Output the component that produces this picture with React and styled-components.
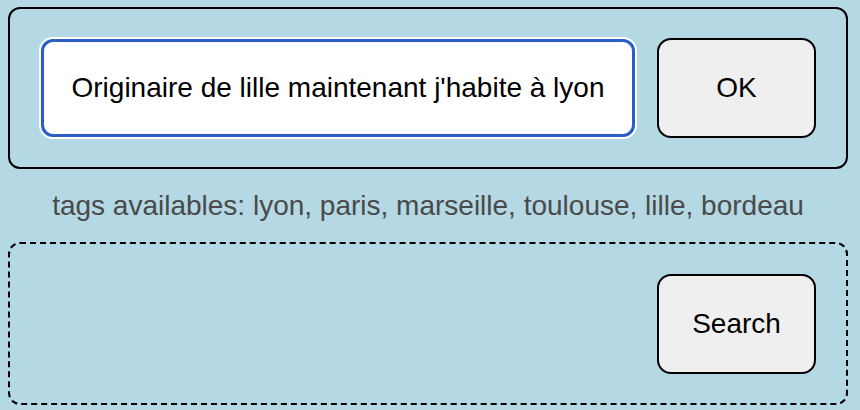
import React from "react";
import styled, { createGlobalStyle } from "styled-components";

const GlobalStyle = createGlobalStyle`
  html, body {
    margin: 0;
    background-color: #b4d8e4;
    font-family: "Liberation Sans", Arial, sans-serif;
  }
`;

const Page = styled.div`
  padding: 7px 12px 0 8px;
  width: 840px;
`;

const FormBox = styled.form`
  display: flex;
  align-items: center;
  gap: 20px;
  border: 2px solid #000;
  border-radius: 12px;
  padding: 28px 30px 28px 29px;
`;

const TextInput = styled.input`
  flex: 1;
  min-width: 0;
  box-sizing: border-box;
  height: 98px;
  margin: 2px;
  border: 3px solid #2b5fc6;
  border-radius: 12px;
  box-shadow: 0 0 0 2px #fff;
  outline: none;
  background: #fff;
  font-family: "Liberation Sans", Arial, sans-serif;
  font-size: 28px;
  color: #000;
  text-align: center;
`;

const Button = styled.button`
  box-sizing: border-box;
  width: 159px;
  height: 100px;
  background: #efefef;
  border: 2px solid #000;
  border-radius: 14px;
  font-family: "Liberation Sans", Arial, sans-serif;
  font-size: 28px;
  color: #000;
  flex-shrink: 0;
`;

const Tags = styled.p`
  margin: 0;
  padding: 21px 0 20px;
  line-height: 32px;
  text-align: center;
  font-size: 28px;
  color: #4a4a4a;
`;

const TagZone = styled.div`
  display: flex;
  justify-content: flex-end;
  align-items: center;
  border: 2px dashed #000;
  border-radius: 12px;
  padding: 30px 30px 29px;
`;

export default function App() {
  return (
    <>
      <GlobalStyle />
      <Page>
        <FormBox onSubmit={(e) => e.preventDefault()}>
          <TextInput
            type="text"
            defaultValue="Originaire de lille maintenant j'habite à lyon"
          />
          <Button type="submit">OK</Button>
        </FormBox>
        <Tags>tags availables: lyon, paris, marseille, toulouse, lille, bordeau</Tags>
        <TagZone>
          <Button type="button">Search</Button>
        </TagZone>
      </Page>
    </>
  );
}
